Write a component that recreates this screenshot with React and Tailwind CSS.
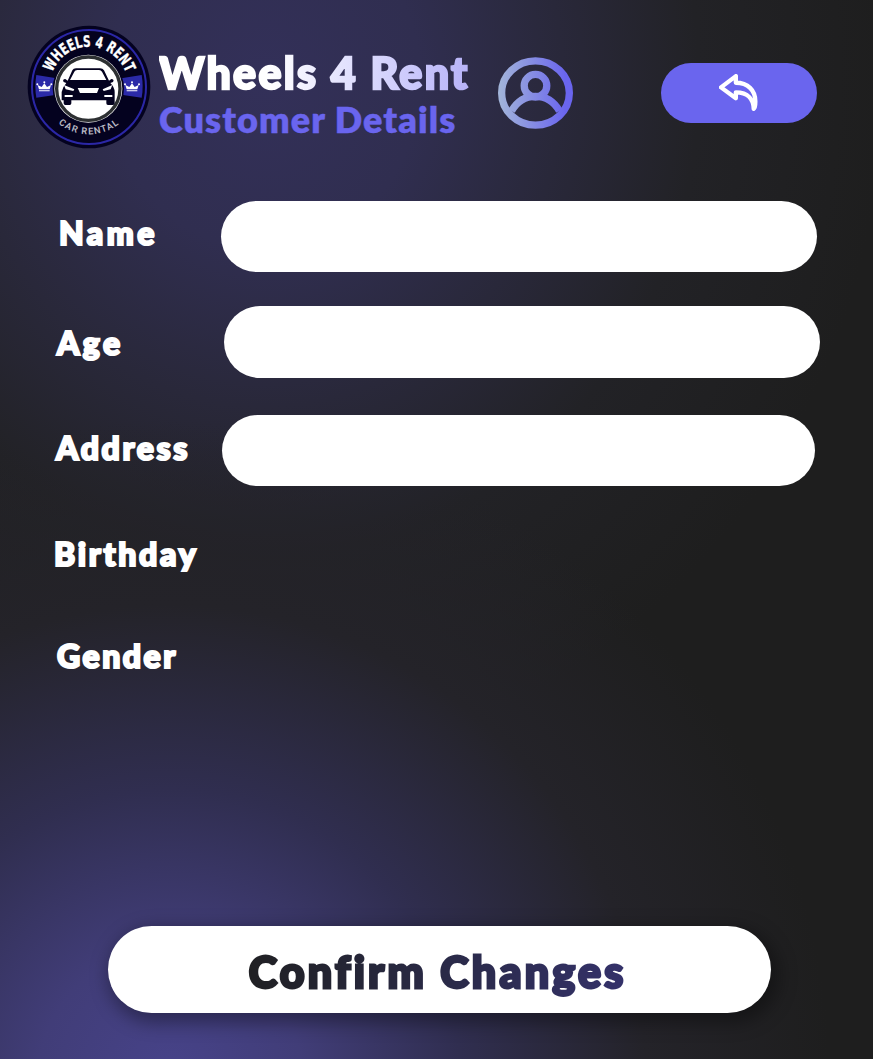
import React from "react";

function Logo() {
  return (
    <svg viewBox="0 0 420 405" className="h-[135px] w-[140px] shrink-0" role="img" aria-label="Wheels 4 Rent">
      <defs>
        <path id="arc-top" d="M89 200 A118 120 0 0 1 325 200" />
        <path id="arc-bottom" d="M62 198 A145 145 0 0 0 352 198" />
      </defs>
      <circle cx="207" cy="201" r="184" fill="#04021f" />
      <circle cx="207" cy="201" r="171" fill="none" stroke="#2b27a6" strokeWidth="6" />
      <path d="M49 165 L110 175 V224 L49 233 Q43 200 49 165Z" fill="#2b2aa8" />
      <path d="M365 165 L304 175 V224 L365 233 Q371 200 365 165Z" fill="#2b2aa8" />
      <circle cx="205" cy="206" r="107" fill="#04021f" />
      <circle cx="205" cy="206" r="102" fill="#f4f4f4" />
      <circle cx="205" cy="206" r="95" fill="#fff" stroke="#2d3032" strokeWidth="10" />
      <g fill="#04021f">
        <path d="M143 182 L157 151 Q160 145 168 145 H240 Q248 145 252 151 L267 182 L274 177 Q284 178 279 186 L271 189 Q284 202 284 216 V250 Q284 255 279 255 H264 Q259 255 259 250 V241 H154 V250 Q154 255 149 255 H136 Q131 255 131 250 V241 H125 V216 Q127 202 139 189 L131 186 Q126 178 136 177Z" />
        <path d="M150 180 L163 155 Q165 150 172 150 H237 Q243 150 246 155 L259 180Z" fill="#fff" />
        <path d="M173 204 H237 L231 219 H180Z" fill="#fff" />
        <path d="M132 195 L163 208 L160 213 L137 208Z M277 195 L248 208 L251 213 L272 208Z" fill="#fff" />
        <path d="M134 228 H158 M253 228 H277" stroke="#fff" strokeWidth="6" />
      </g>
      <g fill="#fff">
        <path d="M57 208 L53 195 L65 201 L73 190 L81 201 L93 195 L89 208Z M57 211 H89 V214 H57Z" />
        <circle cx="52" cy="193" r="3" /><circle cx="73" cy="187" r="3" /><circle cx="94" cy="193" r="3" />
        <path d="M320 208 L316 195 L328 201 L336 190 L344 201 L356 195 L352 208Z M320 211 H352 V214 H320Z" />
        <circle cx="315" cy="193" r="3" /><circle cx="336" cy="187" r="3" /><circle cx="357" cy="193" r="3" />
      </g>
      <text fill="#fff" stroke="#fff" strokeWidth="1" fontFamily="'DejaVu Sans Condensed', 'Liberation Sans Narrow', sans-serif" fontWeight="700" fontSize="47">
        <textPath href="#arc-top" startOffset="44" textLength="287" lengthAdjust="spacingAndGlyphs">WHEELS 4 RENT</textPath>
      </text>
      <text fill="#b9b9c3" fontFamily="Roboto, sans-serif" fontWeight="600" fontSize="28">
        <textPath href="#arc-bottom" startOffset="128" textLength="196" lengthAdjust="spacing">CAR RENTAL</textPath>
      </text>
    </svg>
  );
}

function UserIcon() {
  return (
    <svg viewBox="37 36 226 216" className="h-[72px] w-[75px]" fill="none" stroke="url(#user-gradient)" strokeWidth="22" aria-hidden="true">
      <defs>
        <linearGradient id="user-gradient" gradientUnits="userSpaceOnUse" x1="37" y1="0" x2="263" y2="0">
          <stop offset="0" stopColor="#a3b6d9" />
          <stop offset="0.9" stopColor="#6a65ee" />
        </linearGradient>
      </defs>
      <ellipse cx="150" cy="144" rx="102" ry="97" />
      <circle cx="150" cy="122" r="34" />
      <path d="M78 198 Q103 154 150 154 Q197 154 222 198" />
    </svg>
  );
}

function BackIcon() {
  return (
    <svg viewBox="702 87 124 117" className="h-[39px] w-[41px]" fill="none" stroke="#fff" strokeWidth="13" strokeLinejoin="round" aria-hidden="true">
      <path d="M708 127 L753 93 V113 C789 113 812 135 812 170 C812 184 811 190 807 192 C806 164 791 142 753 142 V160Z" />
    </svg>
  );
}

function Field({ label, className, labelClass, inputClass }) {
  return (
    <label className={`flex items-start ${className}`}>
      <span className={`shrink-0 text-[32px] leading-10 font-black whitespace-nowrap text-white [-webkit-text-stroke:2.2px_#fff] ${labelClass}`}>{label}</span>
      {inputClass && <input type="text" aria-label={label} className={`shrink-0 rounded-full bg-white px-8 text-2xl text-[#1e1e1e] outline-none ${inputClass}`} />}
    </label>
  );
}

export default function App() {
  return (
    <main className="h-[1059px] w-[873px] overflow-hidden bg-[#1e1e1e] bg-[radial-gradient(ellipse_660px_660px_at_170px_1080px,#47438a_0%,#413d78_20%,#302e50_44%,#242329_72%,transparent_100%),radial-gradient(ellipse_620px_680px_at_265px_80px,#333059_0%,#302e50_25%,#29283a_48%,#222226_70%,transparent_100%)] font-[Lato,'Open_Sans',sans-serif]">
      <header className="flex h-[181px] items-start pt-5 pl-5">
        <Logo />
        <div className="-ml-px w-[339px] shrink-0 pt-[26px]">
          <h1 className="w-[312px] bg-linear-to-r from-white from-35% to-[#b7b2f8] bg-clip-text text-[43px] leading-[54px] font-black tracking-[2.3px] whitespace-nowrap text-transparent [-webkit-text-stroke:2.4px_transparent]">Wheels 4 Rent</h1>
          <h2 className="-mt-1 text-[36px] leading-[46px] font-extrabold tracking-[1.1px] whitespace-nowrap text-[#6a65ee] [-webkit-text-stroke:0.4px_#6a65ee]">Customer Details</h2>
        </div>
        <div className="shrink-0 pt-[37px]"><UserIcon /></div>
        <button aria-label="Go back" className="mt-[43px] ml-[88px] flex h-[60px] w-[156px] shrink-0 items-center justify-center rounded-full bg-[#6a65ee]">
          <BackIcon />
        </button>
      </header>
      <form>
        <Field label="Name" className="mt-5 h-[105px] pl-[59px]" labelClass="w-[162px] pt-[12px] tracking-[3.5px]" inputClass="h-[71px] w-[596px]" />
        <Field label="Age" className="h-[109px] pl-[57px]" labelClass="w-[167px] pt-[17px] tracking-[3.4px]" inputClass="h-[72px] w-[596px]" />
        <Field label="Address" className="h-[109px] pl-[56px]" labelClass="w-[166px] pt-[13px] tracking-[2.6px]" inputClass="h-[71px] w-[593px]" />
        <Field label="Birthday" className="h-[102px] pl-[54px]" labelClass="pt-[10px] tracking-[2.7px]" />
        <Field label="Gender" className="h-[300px] pl-[57px]" labelClass="pt-[10px] tracking-[2.5px]" />
        <button type="button" className="ml-[108px] flex h-[87px] w-[663px] items-center justify-center rounded-full bg-white shadow-[4px_6px_18px_4px_rgba(0,0,0,0.35)]">
          <span className="mt-1 mr-[6px] bg-linear-to-r from-[#202023] to-[#34316a] bg-clip-text pl-[2px] text-[43px] leading-[60px] font-black tracking-[3.2px] whitespace-nowrap text-transparent [-webkit-text-stroke:2.8px_transparent]">Confirm Changes</span>
        </button>
      </form>
    </main>
  );
}
